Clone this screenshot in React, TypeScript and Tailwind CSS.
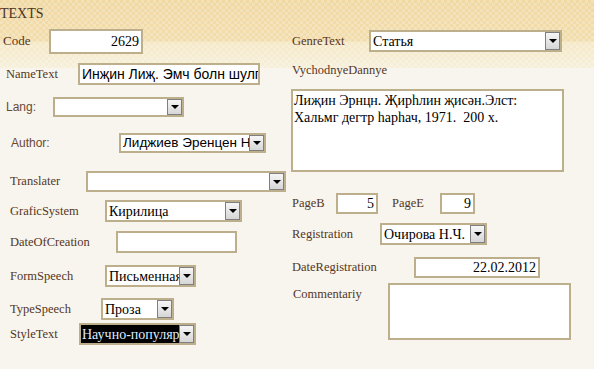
import type { ReactNode } from "react";

const serif = "font-['Liberation_Serif','Times_New_Roman',serif]";
const sans = "font-['Liberation_Sans','DejaVu_Sans',sans-serif]";

const Arrow = () => (
  <div className="flex h-full w-[15px] shrink-0 items-center justify-center border border-[#7f7f7f] bg-[linear-gradient(to_bottom,#f6f6f6,#d6d6d6)]">
    <div className="h-0 w-0 border-x-[4px] border-t-[4px] border-x-transparent border-t-black" />
  </div>
);

const Box = ({
  className,
  children,
  combo,
  right,
  font = serif,
}: {
  className: string;
  children?: ReactNode;
  combo?: boolean;
  right?: boolean;
  font?: string;
}) => (
  <div
    className={`flex shrink-0 items-stretch overflow-hidden border-2 border-[#bdae8c] bg-white text-black ${className}`}
  >
    <div
      className={`flex min-w-0 flex-1 items-center overflow-hidden whitespace-nowrap px-[2px] ${
        right ? "justify-end" : ""
      } ${font}`}
    >
      {children}
    </div>
    {combo && <Arrow />}
  </div>
);

const Label = ({ className, children }: { className: string; children: ReactNode }) => (
  <div className={`shrink-0 whitespace-nowrap text-[12.5px] text-[#553524] ${serif} ${className}`}>
    {children}
  </div>
);

const SansLabel = ({ className, children }: { className: string; children: ReactNode }) => (
  <div className={`shrink-0 whitespace-nowrap text-[12px] text-[#6a4836] ${sans} ${className}`}>
    {children}
  </div>
);

export default function App() {
  return (
    <div className="h-[369px] w-[594px] overflow-hidden [background-image:linear-gradient(to_bottom,transparent_68px,#f7f5ee_68px),repeating-conic-gradient(#ffffff38_0_25%,transparent_0_50%),linear-gradient(to_bottom,#f0d8a3_0px,#f2ddac_41px,#f5e8c6_42px,#f6efda_68px)] [background-size:100%_100%,6px_6px,100%_100%]">
      <div className={`h-[30px] pt-[3px] text-[14px] text-[#4e3322] ${serif}`}>TEXTS</div>

      <div className="flex">
        {/* left column */}
        <div className="flex w-[291px] shrink-0 flex-col">
          <div className="flex h-[22px] items-center">
            <Label className="w-[49px] pl-[3px] text-[13px]">Code</Label>
            <Box className="w-[94px] text-[14px]" right>
              2629
            </Box>
          </div>
          <div className="mt-[11px] flex h-[22px] items-center">
            <Label className="w-[78px] pl-[6px]">NameText</Label>
            <Box className="h-full w-[182px] text-[14px]" font={sans}>
              Инҗин Лиҗ. Эмч болн шулгчнр
            </Box>
          </div>
          <div className="mt-[12px] flex h-[20px] items-center">
            <SansLabel className="w-[53px] pl-[6px]">Lang:</SansLabel>
            <Box className="h-full w-[131px]" combo />
          </div>
          <div className="mt-[16px] flex h-[20px] items-center">
            <SansLabel className="w-[119px] pl-[11px]">Author:</SansLabel>
            <Box className="h-full w-[147px] text-[13.5px]" combo font={sans}>
              Лиджиев Эренцен Нимбуевич
            </Box>
          </div>
          <div className="mt-[18px] flex h-[21px] items-center">
            <Label className="w-[86px] pl-[10px]">Translater</Label>
            <Box className="h-full w-[200px]" combo />
          </div>
          <div className="mt-[8px] flex h-[22px] items-center">
            <Label className="w-[105px] pl-[10px]">GraficSystem</Label>
            <Box className="h-full w-[137px] text-[14px]" combo>
              Кирилица
            </Box>
          </div>
          <div className="mt-[9px] flex h-[22px] items-center">
            <Label className="w-[116px] pl-[10px]">DateOfCreation</Label>
            <Box className="h-full w-[121px]" />
          </div>
          <div className="mt-[12px] flex h-[22px] items-center">
            <Label className="w-[105px] pl-[10px]">FormSpeech</Label>
            <Box className="h-full w-[91px] text-[14px]" combo>
              Письменная
            </Box>
          </div>
          <div className="mt-[11px] flex h-[22px] items-center">
            <Label className="w-[101px] pl-[10px]">TypeSpeech</Label>
            <Box className="h-full w-[73px] text-[14px]" combo>
              Проза
            </Box>
          </div>
          <div className="mt-[3px] flex h-[22px] items-center">
            <Label className="w-[79px] pl-[10px]">StyleText</Label>
            <div className="flex h-full w-[117px] shrink-0 items-stretch overflow-hidden border-2 border-[#bdae8c] bg-white">
              <div className="flex min-w-0 flex-1 items-center overflow-hidden whitespace-nowrap bg-black px-[1px]">
                <span className={`text-[14px] text-[#dcecff] ${serif}`}>Научно-популярный</span>
              </div>
              <Arrow />
            </div>
          </div>
        </div>

        {/* right column */}
        <div className="flex flex-1 flex-col">
          <div className="flex h-[22px] items-center">
            <Label className="w-[78px] pl-[1px]">GenreText</Label>
            <Box className="h-full w-[193px] text-[14px]" combo>
              Статья
            </Box>
          </div>
          <div className="mt-[10px] flex h-[16px] items-center">
            <Label className="pl-[1px]">VychodnyeDannye</Label>
          </div>
          <div
            className={`mt-[11px] h-[83px] w-[273px] border-2 border-[#bdae8c] bg-white px-[1px] pt-[1px] text-[14px] leading-[17px] text-black ${serif}`}
          >
            Лиҗин Эрнцн. Җирһлин җисән.Элст:
            <br />
            Хальмг дегтр һарһач, 1971.&nbsp; 200 х.
          </div>
          <div className="mt-[21px] flex h-[21px] items-center">
            <Label className="w-[45px] pl-[1px]">PageB</Label>
            <Box className="h-full w-[42px] text-[14px]" right>
              5
            </Box>
            <Label className="w-[62px] pl-[14px]">PageE</Label>
            <Box className="h-full w-[35px] text-[14px]" right>
              9
            </Box>
          </div>
          <div className="mt-[9px] flex h-[22px] items-center">
            <Label className="w-[89px] pl-[1px]">Registration</Label>
            <Box className="h-full w-[107px] text-[14px]" combo>
              Очирова Н.Ч.
            </Box>
          </div>
          <div className="mt-[12px] flex h-[21px] items-center">
            <Label className="w-[123px] pl-[1px]">DateRegistration</Label>
            <Box className="h-full w-[126px] text-[14px]" right>
              22.02.2012
            </Box>
          </div>
          <div className="mt-[5px] flex h-[57px] items-start">
            <Label className="w-[97px] pl-[2px] pt-[2px]">Commentariy</Label>
            <Box className="h-full w-[183px]" />
          </div>
        </div>
      </div>
    </div>
  );
}
